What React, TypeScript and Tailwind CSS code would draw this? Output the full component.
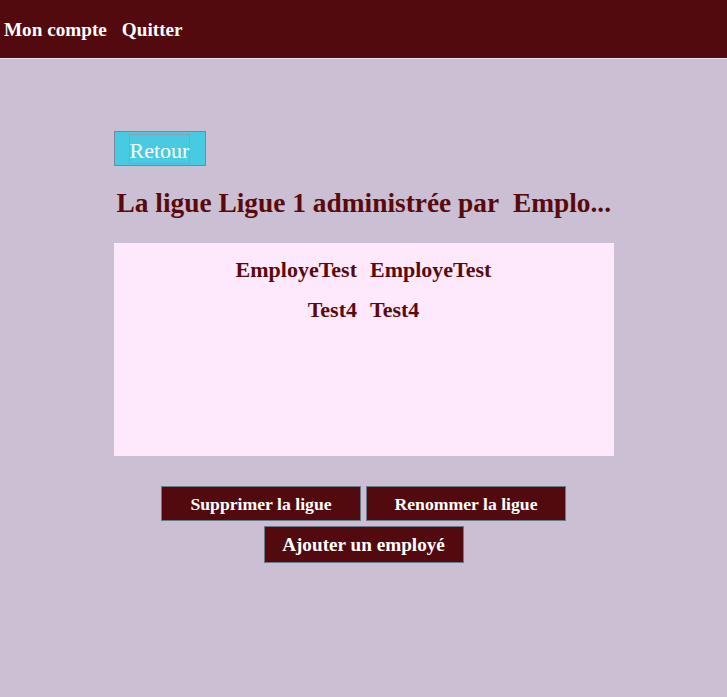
export default function App() {
  const employes = [
    { nom: 'EmployeTest', prenom: 'EmployeTest' },
    { nom: 'Test4', prenom: 'Test4' },
  ];

  return (
    <div className="min-h-[697px] bg-[#cbbfd3] font-['Liberation_Serif','Times_New_Roman',serif]">
      <header className="flex h-[59px] items-center gap-[15px] border-b border-[#ece4ee] bg-[#520a0e] pl-[4px] pt-[2px] text-[19.2px] font-bold text-white">
        <span>Mon compte</span>
        <span>Quitter</span>
      </header>

      <main className="mx-auto w-[500px] pt-[72px]">
        <button className="flex h-[35px] w-[92px] items-start justify-center border border-[#7a8696] bg-[#48cae2] pt-[2px]">
          <span className="block h-[30px] border border-solid border-[#939cae] text-[22px] leading-[31px] text-white">
            Retour
          </span>
        </button>

        <h1 className="mt-[21px] whitespace-nowrap pl-[3px] text-[27.4px] font-bold leading-[32px] text-[#5a0a0c]">
          La ligue Ligue 1 administrée par&nbsp; Emplo...
        </h1>

        <div className="mt-[24px] h-[213px] bg-[#fde9fb] pt-[7px]">
          {employes.map((e) => (
            <div
              key={e.nom}
              className="flex justify-center gap-[13px] text-[22px] font-bold leading-[40px] text-[#5a0a0c]"
            >
              <span>{e.nom}</span>
              <span>{e.prenom}</span>
            </div>
          ))}
        </div>
      </main>

      <div className="mt-[30px] flex flex-col items-center gap-[5px]">
        <div className="flex gap-[5px]">
          <button className="flex h-[35px] w-[200px] items-center justify-center border border-[#6b7a8a] bg-[#520a0e] pt-[2px] text-[17.7px] font-bold text-white">
            Supprimer la ligue
          </button>
          <button className="flex h-[35px] w-[200px] items-center justify-center border border-[#6b7a8a] bg-[#520a0e] pt-[2px] text-[17.7px] font-bold text-white">
            Renommer la ligue
          </button>
        </div>
        <button className="flex h-[37px] w-[200px] items-center justify-center border border-[#6b7a8a] bg-[#520a0e] pt-[2px] text-[19.2px] font-bold text-white">
          Ajouter un employé
        </button>
      </div>
    </div>
  );
}
